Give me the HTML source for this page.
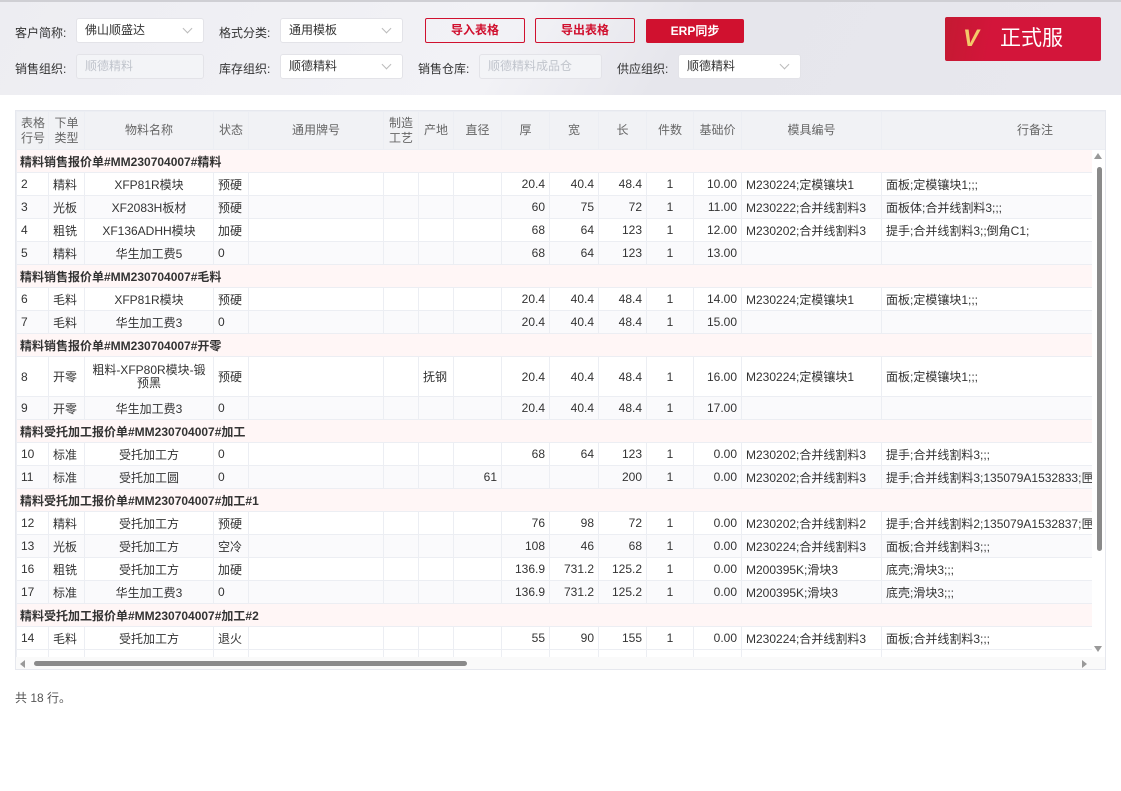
<!DOCTYPE html>
<html><head><meta charset="utf-8"><style>
*{box-sizing:border-box;margin:0;padding:0}
body{width:1121px;height:791px;background:#fff;font-family:"Liberation Sans","Noto Sans CJK SC",sans-serif;font-size:12px;color:#333;position:relative;overflow:hidden}
.top{position:absolute;left:0;top:0;width:1121px;height:95px;background:linear-gradient(120deg,#ededf2 0%,#f2f2f6 45%,#e6e6ec 60%,#e8e8ee 100%);border-top:2px solid #cfcfd4}
.lbl{position:absolute;font-size:12px;color:#333;line-height:14px}
.sel{position:absolute;height:25px;background:#fff;border:1px solid #e3e3e8;border-radius:3px;font-size:12px;line-height:23px;padding-left:8px;color:#333}
.sel.dis{background:#f3f4f7;color:#c0c4cc}
.sel .ar{position:absolute;right:12px;top:6px;width:7px;height:7px;border-right:1px solid #bbb;border-bottom:1px solid #bbb;transform:rotate(45deg)}
.btn{position:absolute;height:25px;border:1px solid #d0112f;border-radius:2px;color:#d0112f;font-size:12px;font-weight:bold;text-align:center;line-height:23px;background:transparent}
.tbl{position:absolute;left:15px;top:110px;width:1091px;height:560px;border:1px solid #e6e8ee;overflow:hidden}
table{border-collapse:collapse;table-layout:fixed;width:1300px;font-size:12px}
td,th{border:1px solid #eceef3;height:23px;white-space:nowrap;overflow:hidden;padding:0 4px;font-weight:normal}
th{background:#f1f2f5;color:#666;height:38px;line-height:15px;text-align:center}
td.c{text-align:center}td.r{text-align:right}
tr.g td{background:#fff6f6;font-weight:bold;color:#333;padding-left:3px}
tr.alt td{background:#fafafc}
</style></head><body>
<div class="top">
<div class="lbl" style="left:15px;top:24px">客户简称:</div>
<div class="sel" style="left:76px;top:16px;width:128px">佛山顺盛达<span class="ar"></span></div>
<div class="lbl" style="left:219px;top:24px">格式分类:</div>
<div class="sel" style="left:280px;top:16px;width:123px">通用模板<span class="ar"></span></div>
<div class="btn" style="left:425px;top:16px;width:100px">导入表格</div>
<div class="btn" style="left:535px;top:16px;width:100px">导出表格</div>
<div class="btn" style="left:646px;top:17px;width:98px;height:24px;background:#d0112f;color:#fff">ERP同步</div>
<div style="position:absolute;left:945px;top:15px;width:156px;height:44px;background:linear-gradient(100deg,#c41a32 0%,#d3153a 30%,#d3153a 100%);border-radius:2px;color:#fff;font-size:21px;line-height:44px"><span style="position:absolute;left:18px;font-style:italic;font-weight:bold;color:#f4c96a;font-size:24px">V</span><span style="position:absolute;left:55px">正式服</span></div>
<div class="lbl" style="left:15px;top:60px">销售组织:</div>
<div class="sel dis" style="left:76px;top:52px;width:128px">顺德精料</div>
<div class="lbl" style="left:219px;top:60px">库存组织:</div>
<div class="sel" style="left:280px;top:52px;width:123px">顺德精料<span class="ar"></span></div>
<div class="lbl" style="left:418px;top:60px">销售仓库:</div>
<div class="sel dis" style="left:479px;top:52px;width:123px">顺德精料成品仓</div>
<div class="lbl" style="left:617px;top:60px">供应组织:</div>
<div class="sel" style="left:678px;top:52px;width:123px">顺德精料<span class="ar"></span></div>
</div>
<div class="tbl">
<table>
<colgroup><col style="width:32px"><col style="width:36px"><col style="width:129px"><col style="width:35px"><col style="width:135px"><col style="width:35px"><col style="width:35px"><col style="width:48px"><col style="width:48px"><col style="width:49px"><col style="width:48px"><col style="width:47px"><col style="width:48px"><col style="width:140px"><col style="width:435px"></colgroup>
<tr><th>表格<br>行号</th><th>下单<br>类型</th><th>物料名称</th><th>状态</th><th>通用牌号</th><th>制造<br>工艺</th><th>产地</th><th>直径</th><th>厚</th><th>宽</th><th>长</th><th>件数</th><th>基础价</th><th>模具编号</th><th style="text-align:left;padding-left:135px">行备注</th></tr>
<tr class="g"><td colspan="15">精料销售报价单#MM230704007#精料</td></tr>
<tr><td>2</td><td>精料</td><td class="c">XFP81R模块</td><td>预硬</td><td></td><td></td><td></td><td></td><td class="r">20.4</td><td class="r">40.4</td><td class="r">48.4</td><td class="c">1</td><td class="r">10.00</td><td>M230224;定模镶块1</td><td>面板;定模镶块1;;;</td></tr>
<tr class="alt"><td>3</td><td>光板</td><td class="c">XF2083H板材</td><td>预硬</td><td></td><td></td><td></td><td></td><td class="r">60</td><td class="r">75</td><td class="r">72</td><td class="c">1</td><td class="r">11.00</td><td>M230222;合并线割料3</td><td>面板体;合并线割料3;;;</td></tr>
<tr><td>4</td><td>粗铣</td><td class="c">XF136ADHH模块</td><td>加硬</td><td></td><td></td><td></td><td></td><td class="r">68</td><td class="r">64</td><td class="r">123</td><td class="c">1</td><td class="r">12.00</td><td>M230202;合并线割料3</td><td>提手;合并线割料3;;倒角C1;</td></tr>
<tr class="alt"><td>5</td><td>精料</td><td class="c">华生加工费5</td><td>0</td><td></td><td></td><td></td><td></td><td class="r">68</td><td class="r">64</td><td class="r">123</td><td class="c">1</td><td class="r">13.00</td><td></td><td></td></tr>
<tr class="g"><td colspan="15">精料销售报价单#MM230704007#毛料</td></tr>
<tr><td>6</td><td>毛料</td><td class="c">XFP81R模块</td><td>预硬</td><td></td><td></td><td></td><td></td><td class="r">20.4</td><td class="r">40.4</td><td class="r">48.4</td><td class="c">1</td><td class="r">14.00</td><td>M230224;定模镶块1</td><td>面板;定模镶块1;;;</td></tr>
<tr class="alt"><td>7</td><td>毛料</td><td class="c">华生加工费3</td><td>0</td><td></td><td></td><td></td><td></td><td class="r">20.4</td><td class="r">40.4</td><td class="r">48.4</td><td class="c">1</td><td class="r">15.00</td><td></td><td></td></tr>
<tr class="g"><td colspan="15">精料销售报价单#MM230704007#开零</td></tr>
<tr><td style="height:40px">8</td><td>开零</td><td class="c" style="white-space:normal;line-height:13px">粗料-XFP80R模块-锻预黑</td><td>预硬</td><td></td><td></td><td>抚钢</td><td></td><td class="r">20.4</td><td class="r">40.4</td><td class="r">48.4</td><td class="c">1</td><td class="r">16.00</td><td>M230224;定模镶块1</td><td>面板;定模镶块1;;;</td></tr>
<tr class="alt"><td>9</td><td>开零</td><td class="c">华生加工费3</td><td>0</td><td></td><td></td><td></td><td></td><td class="r">20.4</td><td class="r">40.4</td><td class="r">48.4</td><td class="c">1</td><td class="r">17.00</td><td></td><td></td></tr>
<tr class="g"><td colspan="15">精料受托加工报价单#MM230704007#加工</td></tr>
<tr><td>10</td><td>标准</td><td class="c">受托加工方</td><td>0</td><td></td><td></td><td></td><td></td><td class="r">68</td><td class="r">64</td><td class="r">123</td><td class="c">1</td><td class="r">0.00</td><td>M230202;合并线割料3</td><td>提手;合并线割料3;;;</td></tr>
<tr class="alt"><td>11</td><td>标准</td><td class="c">受托加工圆</td><td>0</td><td></td><td></td><td></td><td class="r">61</td><td></td><td></td><td class="r">200</td><td class="c">1</td><td class="r">0.00</td><td>M230202;合并线割料3</td><td>提手;合并线割料3;135079A1532833;匣</td></tr>
<tr class="g"><td colspan="15">精料受托加工报价单#MM230704007#加工#1</td></tr>
<tr><td>12</td><td>精料</td><td class="c">受托加工方</td><td>预硬</td><td></td><td></td><td></td><td></td><td class="r">76</td><td class="r">98</td><td class="r">72</td><td class="c">1</td><td class="r">0.00</td><td>M230202;合并线割料2</td><td>提手;合并线割料2;135079A1532837;匣</td></tr>
<tr class="alt"><td>13</td><td>光板</td><td class="c">受托加工方</td><td>空冷</td><td></td><td></td><td></td><td></td><td class="r">108</td><td class="r">46</td><td class="r">68</td><td class="c">1</td><td class="r">0.00</td><td>M230224;合并线割料3</td><td>面板;合并线割料3;;;</td></tr>
<tr><td>16</td><td>粗铣</td><td class="c">受托加工方</td><td>加硬</td><td></td><td></td><td></td><td></td><td class="r">136.9</td><td class="r">731.2</td><td class="r">125.2</td><td class="c">1</td><td class="r">0.00</td><td>M200395K;滑块3</td><td>底壳;滑块3;;;</td></tr>
<tr class="alt"><td>17</td><td>标准</td><td class="c">华生加工费3</td><td>0</td><td></td><td></td><td></td><td></td><td class="r">136.9</td><td class="r">731.2</td><td class="r">125.2</td><td class="c">1</td><td class="r">0.00</td><td>M200395K;滑块3</td><td>底壳;滑块3;;;</td></tr>
<tr class="g"><td colspan="15">精料受托加工报价单#MM230704007#加工#2</td></tr>
<tr><td>14</td><td>毛料</td><td class="c">受托加工方</td><td>退火</td><td></td><td></td><td></td><td></td><td class="r">55</td><td class="r">90</td><td class="r">155</td><td class="c">1</td><td class="r">0.00</td><td>M230224;合并线割料3</td><td>面板;合并线割料3;;;</td></tr>
<tr><td></td><td></td><td></td><td></td><td></td><td></td><td></td><td></td><td></td><td></td><td></td><td></td><td></td><td></td><td></td></tr>
</table>
<div style="position:absolute;left:1076px;top:39px;width:14px;height:507px;background:#fff"></div>
<div style="position:absolute;left:1078px;top:42px;width:0;height:0;border:4px solid transparent;border-bottom:6px solid #999;border-top:0"></div>
<div style="position:absolute;left:1081px;top:56px;width:5px;height:384px;background:#8a8a8a;border-radius:3px"></div>
<div style="position:absolute;left:1078px;top:535px;width:0;height:0;border:4px solid transparent;border-top:6px solid #999;border-bottom:0"></div>
<div style="position:absolute;left:0;top:546px;width:1091px;height:14px;background:#fafafa"></div>
<div style="position:absolute;left:4px;top:549px;width:0;height:0;border:4px solid transparent;border-right:5px solid #999;border-left:0"></div>
<div style="position:absolute;left:18px;top:550px;width:433px;height:5px;background:#8a8a8a;border-radius:3px"></div>
<div style="position:absolute;left:1066px;top:549px;width:0;height:0;border:4px solid transparent;border-left:5px solid #999;border-right:0"></div>
</div>
<div class="lbl" style="left:15px;top:691px;color:#555">共 18 行。</div>
</body></html>
